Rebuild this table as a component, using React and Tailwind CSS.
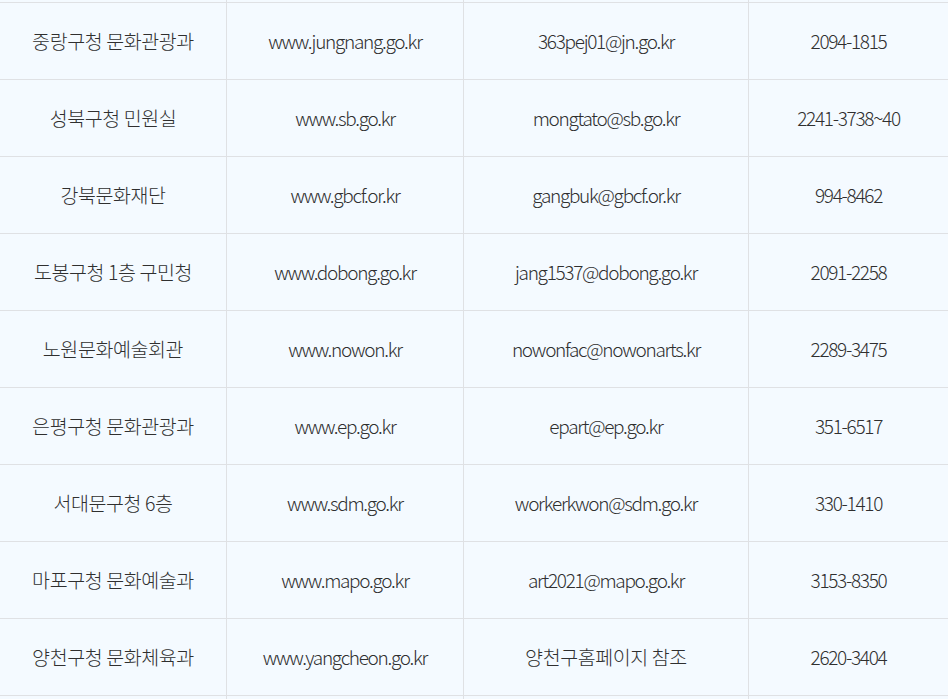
import React from "react";

const rows = [
  ["중랑구청 문화관광과", "www.jungnang.go.kr", "363pej01@jn.go.kr", "2094-1815"],
  ["성북구청 민원실", "www.sb.go.kr", "mongtato@sb.go.kr", "2241-3738~40"],
  ["강북문화재단", "www.gbcf.or.kr", "gangbuk@gbcf.or.kr", "994-8462"],
  ["도봉구청 1층 구민청", "www.dobong.go.kr", "jang1537@dobong.go.kr", "2091-2258"],
  ["노원문화예술회관", "www.nowon.kr", "nowonfac@nowonarts.kr", "2289-3475"],
  ["은평구청 문화관광과", "www.ep.go.kr", "epart@ep.go.kr", "351-6517"],
  ["서대문구청 6층", "www.sdm.go.kr", "workerkwon@sdm.go.kr", "330-1410"],
  ["마포구청 문화예술과", "www.mapo.go.kr", "art2021@mapo.go.kr", "3153-8350"],
  ["양천구청 문화체육과", "www.yangcheon.go.kr", "양천구홈페이지 참조", "2620-3404"],
];

const isKo = (s) => /[\uac00-\ud7a3]/.test(s);

function Row({ cells, h }) {
  return (
    <div className={`grid grid-cols-[226px_237px_285px_200px] border-b border-[#dfe1e4] ${h}`}>
      {[0, 1, 2, 3].map((i) => (
        <div
          key={i}
          className={`flex items-center justify-center ${i > 0 ? "border-l border-[#dfe1e4]" : ""}`}
        >
          {cells ? (
            isKo(cells[i]) ? (
              <span className="text-[19.5px] font-light tracking-[-0.4px]">{cells[i]}</span>
            ) : (
              <span className="text-[19px] font-light tracking-[-1.3px]">{cells[i]}</span>
            )
          ) : null}
        </div>
      ))}
    </div>
  );
}

export default function App() {
  return (
    <div className="w-[952px] h-[699px] bg-white overflow-hidden">
      <div
        className="w-[948px] bg-[#f4faff] text-[#2f2f2f]"
        style={{ fontFamily: '"Noto Sans CJK KR", "Noto Sans", sans-serif' }}
      >
        <Row h="h-[3px]" />
        {rows.map((r, i) => (
          <Row key={i} cells={r} h="h-[77px]" />
        ))}
        <div className="grid grid-cols-[226px_237px_285px_200px] h-[10px]">
          <div />
          <div className="border-l border-[#dfe1e4]" />
          <div className="border-l border-[#dfe1e4]" />
          <div className="border-l border-[#dfe1e4]" />
        </div>
      </div>
    </div>
  );
}
